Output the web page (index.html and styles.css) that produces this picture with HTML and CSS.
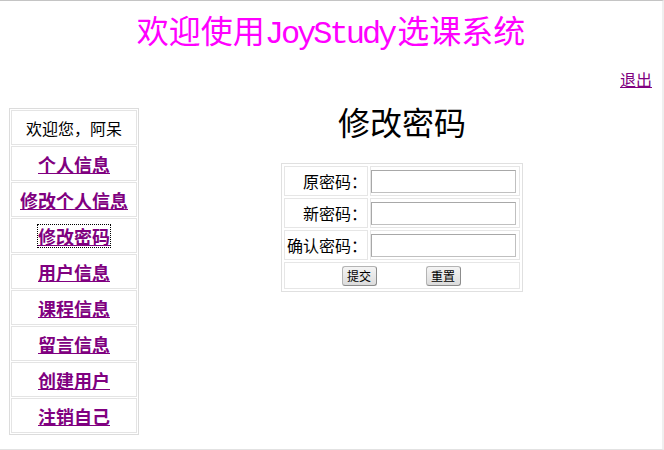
FILE: index.html
```html
<!DOCTYPE html>
<html lang="zh-CN">
<head>
<meta charset="utf-8">
<title>JoyStudy选课系统</title>
<link rel="stylesheet" href="styles.css">
</head>
<body>
<div class="page">
  <h1 class="site-title">欢迎使用<span class="latin">JoyStudy</span>选课系统</h1>
  <div class="logout-row"><a class="link logout" href="#">退出</a></div>
  <div class="main">
    <nav class="sidebar">
      <div class="nav-item greet">欢迎您，阿呆</div>
      <div class="nav-item"><a class="link nav-link" href="#">个人信息</a></div>
      <div class="nav-item"><a class="link nav-link" href="#">修改个人信息</a></div>
      <div class="nav-item"><a class="link nav-link focused" href="#">修改密码</a></div>
      <div class="nav-item"><a class="link nav-link" href="#">用户信息</a></div>
      <div class="nav-item"><a class="link nav-link" href="#">课程信息</a></div>
      <div class="nav-item"><a class="link nav-link" href="#">留言信息</a></div>
      <div class="nav-item"><a class="link nav-link" href="#">创建用户</a></div>
      <div class="nav-item"><a class="link nav-link" href="#">注销自己</a></div>
    </nav>
    <section class="content">
      <h2 class="page-title">修改密码</h2>
      <form class="pw-form">
        <table class="pw-table">
          <tr>
            <td class="label">原密码：</td>
            <td class="field"><input class="text-input" type="password"></td>
          </tr>
          <tr>
            <td class="label">新密码：</td>
            <td class="field"><input class="text-input" type="password"></td>
          </tr>
          <tr>
            <td class="label">确认密码：</td>
            <td class="field"><input class="text-input" type="password"></td>
          </tr>
          <tr>
            <td class="actions" colspan="2">
              <div class="btn-row">
                <button class="btn" type="submit">提交</button>
                <button class="btn" type="reset">重置</button>
              </div>
            </td>
          </tr>
        </table>
      </form>
    </section>
  </div>
</div>
</body>
</html>
```

FILE: styles.css
```css
html, body {
  margin: 0;
  padding: 0;
  background: #ffffff;
}

body {
  font-family: "Noto Sans CJK SC", "Liberation Serif", serif;
  font-size: 16px;
  color: #000000;
}

.page {
  width: 664px;
  height: 450px;
  box-sizing: border-box;
  border-top: 1px solid #c4c4c4;
  border-bottom: 1px solid #e2e2e2;
  border-right: 2px solid #efefef;
  overflow: hidden;
}

.site-title {
  margin: 8px 0 0;
  height: 40px;
  font-size: 32px;
  font-weight: normal;
  line-height: 40px;
  color: #ff00ff;
  text-align: center;
}

.latin {
  font-family: "Liberation Mono", monospace;
  letter-spacing: -3px;
  margin-right: 3px;
  line-height: 1;
}

.logout-row {
  display: flex;
  justify-content: flex-end;
  padding-right: 10px;
  margin-top: 20px;
  height: 20px;
  line-height: 20px;
}

.link {
  color: #800080;
  text-decoration: underline;
}

.logout {
  font-size: 16px;
}

.main {
  display: flex;
  align-items: flex-start;
  margin-top: 19px;
  gap: 3px;
}

.sidebar {
  margin-left: 9px;
  width: 130px;
  box-sizing: border-box;
  border: 1px solid #dcdcdc;
  padding: 1px;
  display: flex;
  flex-direction: column;
  gap: 1px;
}

.nav-item {
  height: 35px;
  box-sizing: border-box;
  border: 1px solid #e4e4e4;
  display: flex;
  align-items: center;
  justify-content: center;
}

.greet {
  font-size: 16px;
}

.nav-link {
  font-size: 18px;
  font-weight: bold;
  line-height: 22px;
}

.focused {
  outline: 1px dotted #000000;
  outline-offset: 0;
}

.content {
  flex: 1;
  display: flex;
  flex-direction: column;
  align-items: center;
}

.page-title {
  margin: -2px 0 0;
  height: 30px;
  font-size: 32px;
  font-weight: normal;
  line-height: 30px;
}

.pw-form {
  margin: 27px 0 0;
}

.pw-table {
  border: 1px solid #e0e0e0;
  border-collapse: separate;
  border-spacing: 2px;
}

.pw-table td {
  border: 1px solid #e6e6e6;
  padding: 0;
  height: 28px;
}

.label {
  width: 82px;
  text-align: right;
  padding-right: 1px;
  font-size: 16px;
  line-height: 20px;
  white-space: nowrap;
}

.field {
  width: 148px;
  padding: 0 0 0 1px;
}

.text-input {
  display: block;
  width: 145px;
  height: 23px;
  box-sizing: border-box;
  border: 1px solid #c0c0c0;
  border-top-color: #a8a8a8;
  border-left-color: #a8a8a8;
  background: #ffffff;
  margin: 0;
  padding: 0 2px;
}

.pw-table td.actions {
  height: 25px;
}

.btn-row {
  display: flex;
  justify-content: center;
  gap: 49px;
  padding-right: 2px;
}

.btn {
  width: 35px;
  height: 20px;
  box-sizing: border-box;
  padding: 0;
  font-family: "Noto Sans CJK SC", sans-serif;
  font-size: 12px;
  line-height: 16px;
  color: #000000;
  background: linear-gradient(#f4f4f4, #dcdcdc);
  border: 1px solid #b4b4b4;
  border-bottom-color: #8c8c8c;
  border-right-color: #8c8c8c;
  border-radius: 3px;
}
```
